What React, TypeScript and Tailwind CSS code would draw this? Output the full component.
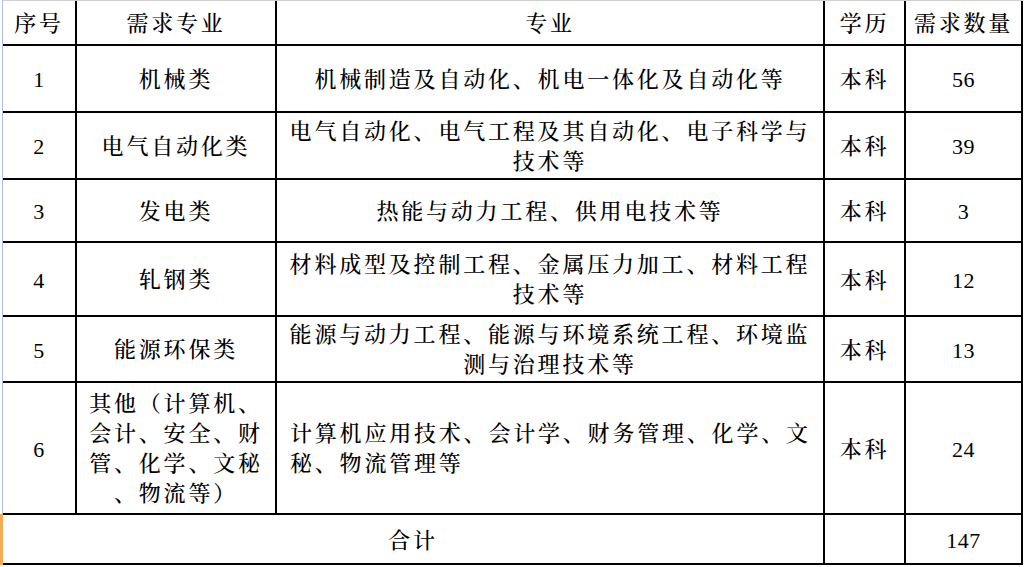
import React from "react";

const FONT = {
  fontFamily:
    '"Liberation Serif", "Noto Serif CJK SC", "Noto Sans CJK SC", serif',
};

type Row = {
  no: string;
  cat: string[];
  major: string[];
  majorAlign?: "center" | "left";
  edu: string;
  count: string;
  h: string;
};

const rows: Row[] = [
  { no: "1", cat: ["机械类"], major: ["机械制造及自动化、机电一体化及自动化等"], edu: "本科", count: "56", h: "h-[67px]" },
  { no: "2", cat: ["电气自动化类"], major: ["电气自动化、电气工程及其自动化、电子科学与", "技术等"], edu: "本科", count: "39", h: "h-[67px]" },
  { no: "3", cat: ["发电类"], major: ["热能与动力工程、供用电技术等"], edu: "本科", count: "3", h: "h-[63px]" },
  { no: "4", cat: ["轧钢类"], major: ["材料成型及控制工程、金属压力加工、材料工程", "技术等"], edu: "本科", count: "12", h: "h-[74px]" },
  { no: "5", cat: ["能源环保类"], major: ["能源与动力工程、能源与环境系统工程、环境监", "测与治理技术等"], edu: "本科", count: "13", h: "h-[66px]" },
  {
    no: "6",
    cat: ["其他（计算机、", "会计、安全、财", "管、化学、文秘", "、物流等）"],
    major: ["计算机应用技术、会计学、财务管理、化学、文", "秘、物流管理等"],
    majorAlign: "left",
    edu: "本科",
    count: "24",
    h: "h-[132px]",
  },
];

function Lines({ lines, align = "center" }: { lines: string[]; align?: "center" | "left" }) {
  return (
    <div className={align === "left" ? "text-left" : "text-center"}>
      {lines.map((l, i) => (
        <div key={i} className="leading-[30px] whitespace-nowrap">
          {l}
        </div>
      ))}
    </div>
  );
}

const cellBase =
  "flex items-center justify-center border-r-2 border-b-2 border-black text-[22px] font-medium text-black pt-[2px]";
const cjk = "tracking-[2.8px]";
const num = "tracking-[0.5px] text-[22px]";

export default function App() {
  return (
    <div className="w-[1026px] h-[567px] bg-white overflow-hidden flex" style={FONT}>
      {/* left edge strip */}
      <div className="w-[3px] flex flex-col shrink-0">
        <div className="h-[514px] flex">
          <div className="ml-[2px] w-[1px] bg-[#a8c3e6]" />
        </div>
        <div className="h-[51px] bg-[#f4ac52]" />
      </div>
      <div className="flex flex-col border-t border-[#d0d0d0]">
        {/* header */}
        <div className={`flex h-[45px] ${cjk}`}>
          <div className={`${cellBase} w-[74px]`}>序号</div>
          <div className={`${cellBase} w-[200px]`}>需求专业</div>
          <div className={`${cellBase} w-[548px]`}>专业</div>
          <div className={`${cellBase} w-[81px]`}>学历</div>
          <div className={`${cellBase} w-[117px]`}>需求数量</div>
        </div>
        {rows.map((r) => (
          <div key={r.no} className={`flex ${r.h}`}>
            <div className={`${cellBase} ${num} w-[74px]`}>{r.no}</div>
            <div className={`${cellBase} ${cjk} w-[200px]`}>
              <Lines lines={r.cat} />
            </div>
            <div className={`${cellBase} ${cjk} w-[548px] ${r.majorAlign === "left" ? "justify-start pl-[13px]" : ""}`}>
              <Lines lines={r.major} align={r.majorAlign} />
            </div>
            <div className={`${cellBase} ${cjk} w-[81px]`}>{r.edu}</div>
            <div className={`${cellBase} ${num} w-[117px]`}>{r.count}</div>
          </div>
        ))}
        <div className="flex h-[50px]">
          <div className={`${cellBase} ${cjk} w-[822px]`}>合计</div>
          <div className={`${cellBase} w-[81px]`} />
          <div className={`${cellBase} ${num} w-[117px]`}>147</div>
        </div>
      </div>
    </div>
  );
}
